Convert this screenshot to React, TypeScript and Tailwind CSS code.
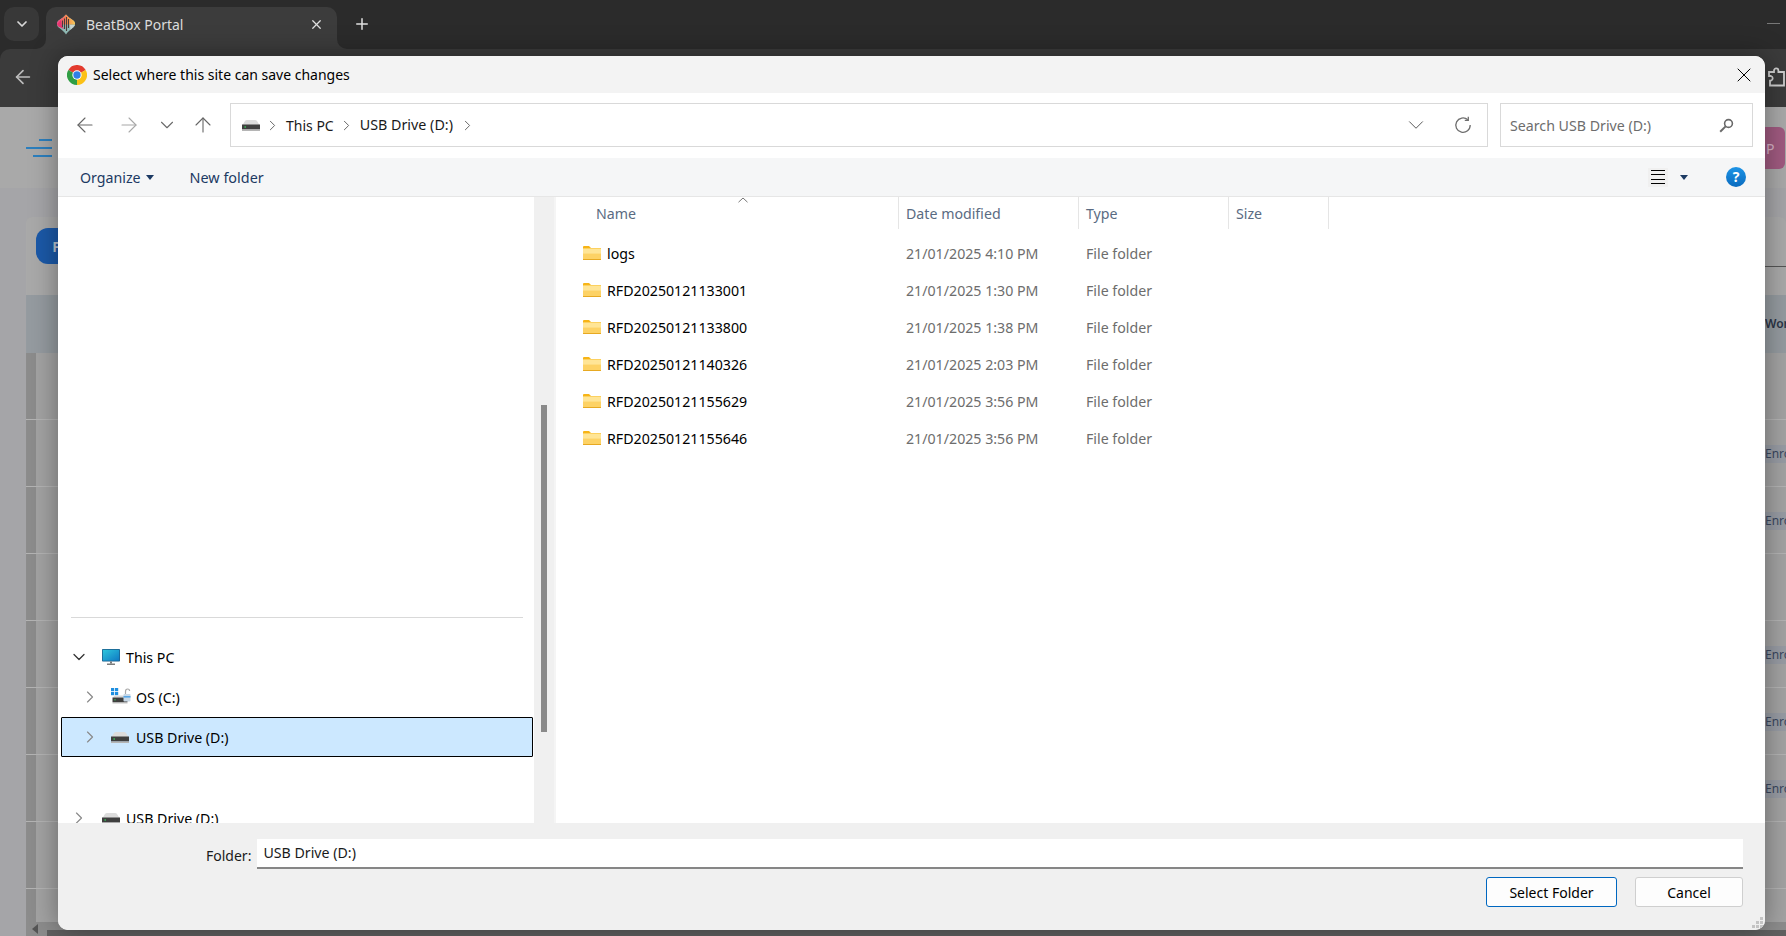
import { ArrowLeft, ArrowRight, ArrowUp, ChevronDown, ChevronRight, Plus, X } from 'lucide-react'

const folders = [
  { name: 'logs', date: '21/01/2025 4:10 PM' },
  { name: 'RFD20250121133001', date: '21/01/2025 1:30 PM' },
  { name: 'RFD20250121133800', date: '21/01/2025 1:38 PM' },
  { name: 'RFD20250121140326', date: '21/01/2025 2:03 PM' },
  { name: 'RFD20250121155629', date: '21/01/2025 3:56 PM' },
  { name: 'RFD20250121155646', date: '21/01/2025 3:56 PM' },
]

const pageRows = ['', 'Enrolled', 'Enrolled', '', 'Enrolled', 'Enrolled', 'Enrolled', '', '']

function ChromeLogo() {
  return (
    <svg width="20" height="20" viewBox="0 0 24 24" className="shrink-0">
      <path d="M12 12L1.6 6A12 12 0 0 1 22.4 6Z" fill="#e33b2e" />
      <path d="M12 12L22.4 6A12 12 0 0 1 12 24Z" fill="#fbc116" />
      <path d="M12 12L12 24A12 12 0 0 1 1.6 6Z" fill="#2f9e44" />
      <circle cx="12" cy="12" r="5.6" fill="#fff" />
      <circle cx="12" cy="12" r="4.4" fill="#2f7fe6" />
    </svg>
  )
}

function BeatBoxLogo() {
  return (
    <svg width="20" height="21" viewBox="0 0 20 21" className="shrink-0">
      <defs>
        <linearGradient id="bb-top" x1="0" y1="0" x2="1" y2="0">
          <stop offset="0" stopColor="#ee3f8c" />
          <stop offset="0.55" stopColor="#f7894a" />
          <stop offset="1" stopColor="#f4c95a" />
        </linearGradient>
      </defs>
      <path d="M10 0.5Q12 3 18 7Q20 10 18 13Q12 17 10 20.5Q8 17 2 13Q0 10 2 7Q8 3 10 0.5Z" fill="#8fb9b4" />
      <path d="M10 0.5Q12 3 18 7Q19.5 9 19 10.5H1Q0.5 9 2 7Q8 3 10 0.5Z" fill="url(#bb-top)" />
      <path d="M1 10.5L5 6L6 12L8 15L2.5 12.8Z" fill="#e8356f" />
      <path d="M14 11H19L14.5 16Z" fill="#c9d3d2" />
      <path d="M6.5 6.5V13M8.5 4.5V15M10.5 3V17M12.5 5V14" stroke="#4b3a3a" strokeWidth="1.1" />
    </svg>
  )
}

function FolderIcon() {
  return (
    <svg width="18" height="14" viewBox="0 0 18 14" className="shrink-0">
      <path d="M0 1.2C0 .5 .5 0 1.2 0H6L8 2H18V6H0Z" fill="#f7b416" />
      <rect x="0" y="2.6" width="18" height="11.4" rx="0.6" fill="#fdd265" />
      <rect x="0" y="2.6" width="18" height="5" fill="#ffe596" />
      <rect x="0" y="13" width="18" height="1" fill="#e7a922" />
    </svg>
  )
}

function DriveIcon() {
  return (
    <svg width="18" height="11" viewBox="0 0 18 11" className="shrink-0">
      <path d="M0.5 5L3 1Q3.6 0 5 0H13Q14.4 0 15 1L17.5 5Z" fill="#dcdcdc" />
      <rect x="0" y="4.5" width="18" height="5" fill="#3f3f3f" />
      <rect x="0" y="9.5" width="18" height="1.5" fill="#b5b5b5" />
      <rect x="2.5" y="6.3" width="1.4" height="1.4" fill="#35d05a" />
    </svg>
  )
}

function OsDriveIcon() {
  return (
    <svg width="20" height="18" viewBox="0 0 20 18" className="shrink-0">
      <rect x="0" y="0" width="3.2" height="3.2" fill="#1f8fe0" />
      <rect x="4" y="0" width="3.2" height="3.2" fill="#1f8fe0" />
      <rect x="0" y="4" width="3.2" height="3.2" fill="#1f8fe0" />
      <rect x="4" y="4" width="3.2" height="3.2" fill="#1f8fe0" />
      <path d="M2 9.5L3.4 7.5H16V9.5Z" fill="#d8d8d8" />
      <rect x="1.5" y="9.5" width="15" height="4.5" fill="#3f3f3f" />
      <rect x="1.5" y="14" width="15" height="1.4" fill="#b5b5b5" />
      <rect x="3.4" y="11.2" width="1.2" height="1.2" fill="#35d05a" />
      <path d="M14.5 6V3.4Q14.5 1 16.6 1Q18.6 1 18.6 3" fill="none" stroke="#a8a8a8" strokeWidth="1.2" />
      <rect x="12.5" y="6" width="7" height="7.5" rx="0.8" fill="#c8d8e6" />
      <rect x="12.5" y="8" width="7" height="1.6" fill="#58a6e6" />
    </svg>
  )
}

function MonitorIcon() {
  return (
    <svg width="18" height="16" viewBox="0 0 18 16" className="shrink-0">
      <defs>
        <linearGradient id="pc-screen" x1="0" y1="0" x2="1" y2="1">
          <stop offset="0" stopColor="#2cc6dc" />
          <stop offset="1" stopColor="#0f79c4" />
        </linearGradient>
      </defs>
      <rect x="0" y="0" width="18" height="12.5" rx="0.8" fill="#1b5f8c" />
      <rect x="0.8" y="0.8" width="16.4" height="10.9" fill="url(#pc-screen)" />
      <rect x="8" y="12.5" width="2" height="2" fill="#7a7a7a" />
      <rect x="5" y="14.6" width="8" height="1.2" fill="#5c5c5c" />
    </svg>
  )
}

function ExtensionIcon() {
  return (
    <svg width="18" height="20" viewBox="0 0 18 20" fill="none" stroke="#cfcfcf" strokeWidth="1.8" className="shrink-0">
      <path d="M2 5H7V3.6A2.2 2.2 0 0 1 11.4 3.6V5H17V18.5H3V13.6H4A2.4 2.4 0 0 0 4 9H2Z" />
    </svg>
  )
}

function RefreshIcon() {
  return (
    <svg width="18" height="18" viewBox="0 0 18 18" fill="none" stroke="#6f6f6f" strokeWidth="1.3">
      <path d="M13.8 3.8A7.2 7.2 0 1 0 16.2 9" />
      <path d="M14.3 0.8V4.3H10.8" />
    </svg>
  )
}

function SearchIcon() {
  return (
    <svg width="15" height="15" viewBox="0 0 15 15" fill="none" stroke="#6a6a6a">
      <circle cx="9.5" cy="5.5" r="3.9" strokeWidth="1.6" />
      <path d="M6.6 8.4L1.2 13.8" strokeWidth="2" />
    </svg>
  )
}

function HelpIcon() {
  return (
    <div className="flex h-5 w-5 items-center justify-center rounded-full bg-gradient-to-b from-[#1d94e6] to-[#0a6bbf] text-[14px] font-bold leading-none text-white">
      ?
    </div>
  )
}

function Caret({ color = '#1c3a63' }: { color?: string }) {
  return (
    <svg width="8" height="5" viewBox="0 0 8 5" className="shrink-0">
      <path d="M0 0H8L4 5Z" fill={color} />
    </svg>
  )
}

function Gripper() {
  return (
    <svg width="12" height="12" viewBox="0 0 12 12" fill="#c4c4c4" className="absolute bottom-[1px] right-[1px]">
      <rect x="8" y="0" width="3" height="3" />
      <rect x="4" y="4" width="3" height="3" />
      <rect x="8" y="4" width="3" height="3" />
      <rect x="0" y="8" width="3" height="3" />
      <rect x="4" y="8" width="3" height="3" />
      <rect x="8" y="8" width="3" height="3" />
    </svg>
  )
}

function BrowserChrome() {
  return (
    <>
      <div className="flex h-[49px] shrink-0 items-start bg-[#2b2b2b] pt-[7px]">
        <div className="ml-1 flex h-[34px] w-[35px] items-center justify-center rounded-[10px] bg-[#383838]">
          <ChevronDown size={16} strokeWidth={2.6} className="text-[#d8d8d8]" />
        </div>
        <div className="relative ml-[7px] flex h-[42px] w-[291px] items-center rounded-t-[10px] bg-[#3c3c3c] pb-[8px] pl-[10px] pr-[13px]">
          <div className="absolute -left-[10px] bottom-0 h-[10px] w-[10px] bg-[#3c3c3c]">
            <div className="h-full w-full rounded-br-[10px] bg-[#2b2b2b]" />
          </div>
          <div className="absolute -right-[10px] bottom-0 h-[10px] w-[10px] bg-[#3c3c3c]">
            <div className="h-full w-full rounded-bl-[10px] bg-[#2b2b2b]" />
          </div>
          <BeatBoxLogo />
          <span className="ml-[10px] text-[14px] text-[#dcdcdc]">BeatBox Portal</span>
          <X size={15} strokeWidth={2} className="ml-auto text-[#e0e0e0]" />
        </div>
        <Plus size={18} strokeWidth={2} className="ml-[16px] mt-[8px] text-[#e0e0e0]" />
        <div className="ml-auto mr-[6px] mt-[16px] h-px w-[13px] bg-[#777777]" />
      </div>
      <div className="flex h-[58px] shrink-0 items-center justify-between rounded-tl-[10px] bg-[#3b3b3b] pb-[2px] pl-[12px] pr-[1px]">
        <ArrowLeft size={22} strokeWidth={1.8} className="text-[#bdbdbd]" />
        <ExtensionIcon />
      </div>
    </>
  )
}

function DimmedPage() {
  return (
    <div className="flex min-h-0 flex-1 flex-col overflow-hidden bg-[#a5a5a8]">
      <div className="flex h-[81px] shrink-0 items-start justify-between bg-[#a9a9a9] pl-[26px] pt-[20px]">
        <div className="mt-[12px] flex w-[26px] flex-col items-end gap-[6px]">
          <div className="h-[2px] w-[13px] bg-[#2c7fbe]" />
          <div className="h-[2px] w-[26px] bg-[#2c7fbe]" />
          <div className="h-[2px] w-[19px] bg-[#2c7fbe]" />
        </div>
        <div className="mr-[1px] flex h-[42px] w-[32px] items-center rounded-[6px] bg-[#a05a80] pl-[13px] text-[14px] text-[#d8b4c8]">P</div>
      </div>
      <div className="ml-[26px] mt-[29px] flex min-h-0 flex-1 flex-col overflow-hidden rounded-t-[6px] bg-[#a3a3a3]">
        <div className="flex h-[78px] shrink-0 items-start justify-between bg-[#a9a9a9] pl-[10px] pt-[11px]">
          <div className="flex h-[36px] w-[60px] items-center justify-end rounded-[12px] bg-[#1b59a8] pr-[36px] text-[14px] font-bold text-[#b9c4d0]">F</div>
          <div className="mt-[38px] h-px w-[21px] bg-[#555555]" />
        </div>
        <div className="flex h-[58px] shrink-0 items-center justify-end overflow-hidden bg-[#959ba0]">
          <span className="w-[21px] overflow-hidden whitespace-nowrap text-[12px] font-semibold text-[#2a3446]">Work</span>
        </div>
        {pageRows.map((status, i) => (
          <div key={i} className="flex h-[67px] shrink-0 border-b border-[#b4b4b4]">
            <div className="w-[10px] shrink-0 bg-[#8c8c8c]" />
            <div className="flex flex-1 items-center justify-end">
              {status && (
                <span className="mt-[1px] w-[21px] overflow-hidden whitespace-nowrap bg-[#989ca4] text-[12px] text-[#3a4760]">{status}</span>
              )}
            </div>
          </div>
        ))}
      </div>
      <div className="absolute bottom-0 left-[26px] right-0 flex h-[14px] items-center bg-[#8c8c8c]">
        <div className="ml-[6px] h-0 w-0 border-y-[5px] border-r-[6px] border-y-transparent border-r-[#555555]" />
      </div>
      <div className="absolute bottom-0 left-[47px] right-0 h-[6px] bg-[#606060]" />
    </div>
  )
}

function TreeRow({ level, expanded, selected, icon, label }: { level: 0 | 1; expanded?: boolean; selected?: boolean; icon: React.ReactNode; label: string }) {
  return (
    <div
      className={`mx-[3px] flex h-10 w-[472px] shrink-0 items-center rounded-[1px] ${
        selected ? 'border border-black bg-[#cce8ff]' : 'border border-transparent'
      } ${level === 0 ? 'pl-[7px]' : 'pl-[18px]'}`}
    >
      {expanded ? (
        <ChevronDown size={20} strokeWidth={1.5} className="shrink-0 text-[#333333]" />
      ) : (
        <ChevronRight size={20} strokeWidth={1.4} className="shrink-0 text-[#8a8a8a]" />
      )}
      <div className={`flex shrink-0 justify-start ${level === 0 ? 'ml-[13px] w-[24px]' : 'ml-[11px] w-[25px]'}`}>{icon}</div>
      <span className="pt-[1px] text-[14.2px] text-black">{label}</span>
    </div>
  )
}

function FileDialog() {
  return (
    <div className="absolute left-[58px] top-[56px] flex h-[874px] w-[1707px] flex-col overflow-hidden rounded-[10px] bg-white shadow-[0_0_28px_rgba(0,0,0,0.38)]">
      <div className="flex h-[37px] shrink-0 items-center bg-[#f3f3f3] pl-[9px] pr-[9px]">
        <ChromeLogo />
        <span className="ml-[6px] text-[14px] text-black">Select where this site can save changes</span>
        <X size={24} strokeWidth={1} className="ml-auto text-black" />
      </div>

      <div className="flex h-[65px] shrink-0 items-center bg-white pb-[1px] pl-[15px] pr-[12px]">
        <ArrowLeft size={24} strokeWidth={1.1} className="shrink-0 text-[#666666]" />
        <ArrowRight size={24} strokeWidth={1.1} className="ml-[20px] shrink-0 text-[#a8a8a8]" />
        <ChevronDown size={22} strokeWidth={1.2} className="ml-[15px] shrink-0 text-[#6a6a6a]" />
        <ArrowUp size={24} strokeWidth={1.1} className="ml-[13px] shrink-0 text-[#666666]" />
        <div className="ml-[15px] flex h-[44px] w-[1258px] items-center border border-[#d9d9d9] pl-[11px]">
          <DriveIcon />
          <ChevronRight size={17} strokeWidth={1.4} className="ml-[4px] text-[#666666]" />
          <span className="ml-[5px] text-[14px] text-[#1a1a1a]">This PC</span>
          <ChevronRight size={17} strokeWidth={1.4} className="ml-[4px] text-[#666666]" />
          <span className="ml-[5px] text-[14.3px] text-[#1a1a1a]">USB Drive (D:)</span>
          <ChevronRight size={17} strokeWidth={1.4} className="ml-[6px] text-[#666666]" />
          <ChevronDown size={26} strokeWidth={0.9} className="ml-auto text-[#555555]" />
          <div className="ml-[25px] mr-[15px]">
            <RefreshIcon />
          </div>
        </div>
        <div className="ml-[12px] flex h-[44px] w-[253px] items-center border border-[#d9d9d9] pl-[9px] pr-[18px]">
          <span className="pt-[1px] text-[14.2px] text-[#6d6d6d]">Search USB Drive (D:)</span>
          <div className="ml-auto">
            <SearchIcon />
          </div>
        </div>
      </div>

      <div className="flex h-[39px] shrink-0 items-center border-b border-[#e6e6e6] bg-[#f5f6f7] pl-[22px] pr-[19px]">
        <span className="pt-[1px] text-[14.2px] text-[#1c3a63]">Organize</span>
        <div className="ml-[5px]">
          <Caret />
        </div>
        <span className="ml-[36px] pt-[1px] text-[14.4px] text-[#1c3a63]">New folder</span>
        <div className="ml-auto flex h-[19px] w-[20px] flex-col items-center justify-center gap-[3.3px] bg-[#f0f0f0]">
          <div className="h-px w-[14px] bg-black" />
          <div className="h-px w-[14px] bg-black" />
          <div className="h-px w-[14px] bg-black" />
          <div className="h-px w-[14px] bg-black" />
        </div>
        <div className="ml-[12px]">
          <Caret />
        </div>
        <div className="ml-[38px]">
          <HelpIcon />
        </div>
      </div>

      <div className="flex min-h-0 flex-1">
        <div className="flex w-[476px] shrink-0 flex-col overflow-hidden bg-white pt-[420px]">
          <div className="ml-[13px] h-px w-[452px] shrink-0 bg-[#d9d9d9]" />
          <div className="h-[19px] shrink-0" />
          <TreeRow level={0} expanded icon={<MonitorIcon />} label="This PC" />
          <TreeRow level={1} icon={<OsDriveIcon />} label="OS (C:)" />
          <TreeRow level={1} selected icon={<DriveIcon />} label="USB Drive (D:)" />
          <div className="h-[41px] shrink-0" />
          <TreeRow level={0} icon={<DriveIcon />} label="USB Drive (D:)" />
        </div>

        <div className="flex w-[20px] shrink-0 flex-col bg-[#f0f0f0] pl-[7px] pt-[208px]">
          <div className="h-[327px] w-[6px] bg-[#8a8a8a]" />
        </div>

        <div className="min-w-0 flex-1 border-l-2 border-[#f5f5f5] bg-white">
          <div className="grid h-[32px] grid-cols-[342px_180px_150px_101px] text-[14.2px] text-[#5a6b82]">
            <div className="relative flex items-center pl-[40px] pt-[1px]">
              Name
              <svg width="10" height="6" viewBox="0 0 10 6" fill="none" stroke="#777777" className="absolute left-[182px] top-0">
                <path d="M0.5 5.2L5 1L9.5 5.2" />
              </svg>
            </div>
            <div className="flex items-center border-l border-[#e5e5e5] pl-[7px] pt-[1px]">Date modified</div>
            <div className="flex items-center border-l border-[#e5e5e5] pl-[7px] pt-[1px]">Type</div>
            <div className="flex items-center border-x border-[#e5e5e5] pl-[7px] pt-[1px]">Size</div>
          </div>
          <div className="mt-[6px] flex flex-col">
            {folders.map((folder) => (
              <div key={folder.name} className="grid h-[37px] grid-cols-[342px_180px_150px_101px] items-center text-[14.2px]">
                <div className="flex items-center pl-[27px] text-black">
                  <FolderIcon />
                  <span className="ml-[6px]">{folder.name}</span>
                </div>
                <div className="pl-[8px] text-[#6d6d6d]">{folder.date}</div>
                <div className="pl-[8px] text-[#6d6d6d]">File folder</div>
                <div />
              </div>
            ))}
          </div>
        </div>
      </div>

      <div className="relative flex h-[107px] shrink-0 flex-col bg-[#f0f0f0] pl-[148px] pr-[22px] pt-[16px]">
        <div className="flex items-center">
          <span className="pt-[2px] text-[14px] text-[#1a1a1a]">Folder:</span>
          <div className="ml-[6px] flex h-[30px] flex-1 items-center border-b-2 border-[#868686] bg-white pl-[6px] text-[14.2px] text-[#1a1a1a]">USB Drive (D:)</div>
        </div>
        <div className="mt-[8px] flex justify-end gap-[18px]">
          <button className="h-[30px] w-[131px] rounded-[3px] border-[1.5px] border-[#0067c0] bg-[#fdfdfd] text-[14px] text-black">Select Folder</button>
          <button className="h-[30px] w-[108px] rounded-[3px] border border-[#cfcfcf] bg-[#fdfdfd] text-[14px] text-black">Cancel</button>
        </div>
        <Gripper />
      </div>
    </div>
  )
}

export default function App() {
  return (
    <div className="relative flex h-[936px] w-[1786px] flex-col overflow-hidden bg-[#2b2b2b] font-['Noto_Sans',sans-serif]">
      <BrowserChrome />
      <DimmedPage />
      <FileDialog />
    </div>
  )
}
